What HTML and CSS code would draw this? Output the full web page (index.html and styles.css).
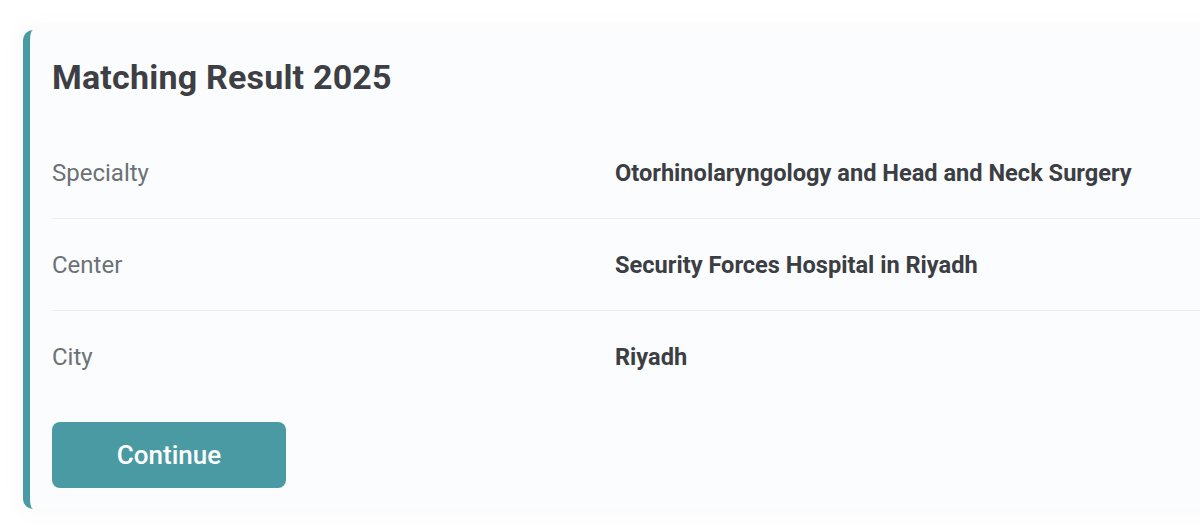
FILE: index.html
```html
<!DOCTYPE html>
<html>
<head>
<meta charset="utf-8">
<link rel="stylesheet" href="styles.css">
</head>
<body>
<div class="page">
  <section class="card">
    <h1 class="title">Matching Result 2025</h1>
    <div class="rows">
      <div class="row">
        <span class="label">Specialty</span>
        <span class="value">Otorhinolaryngology and Head and Neck Surgery</span>
      </div>
      <div class="row">
        <span class="label">Center</span>
        <span class="value">Security Forces Hospital in Riyadh</span>
      </div>
      <div class="row last">
        <span class="label">City</span>
        <span class="value">Riyadh</span>
      </div>
    </div>
    <button class="btn">Continue</button>
  </section>
</div>
</body>
</html>
```

FILE: styles.css
```css
html, body {
  margin: 0;
  padding: 0;
  background: #ffffff;
  overflow: hidden;
}
body {
  font-family: Roboto, "Noto Sans", sans-serif;
  width: 1200px;
  height: 527px;
}
.page {
  padding: 30px 0 0 23px;
}
.card {
  width: 1240px;
  box-sizing: border-box;
  background: #fbfcfd;
  border-left: 7px solid #4a9aa3;
  border-radius: 10px;
  box-shadow: 0 0 22px rgba(120, 110, 90, 0.06);
  padding: 27px 0 21px 22px;
}
.title {
  margin: 0;
  font-size: 34px;
  line-height: 40px;
  font-weight: 700;
  color: #3d3f44;
  letter-spacing: 0.2px;
}
.rows {
  margin-top: 30px;
}
.row {
  display: grid;
  grid-template-columns: 563px 1fr;
  align-items: center;
  height: 91px;
  border-bottom: 1px solid #eceff1;
}
.row.last {
  border-bottom: none;
  height: 92px;
}
.label {
  font-size: 24px;
  color: #6b7275;
}
.value {
  font-size: 23.6px;
  font-weight: 700;
  color: #3b3e43;
}
.btn {
  margin-top: 19px;
  width: 234px;
  height: 66px;
  border: none;
  border-radius: 8px;
  background: #4a9aa3;
  color: #ffffff;
  font-family: Roboto, "Noto Sans", sans-serif;
  font-size: 26px;
  font-weight: 500;
  cursor: pointer;
}
```
